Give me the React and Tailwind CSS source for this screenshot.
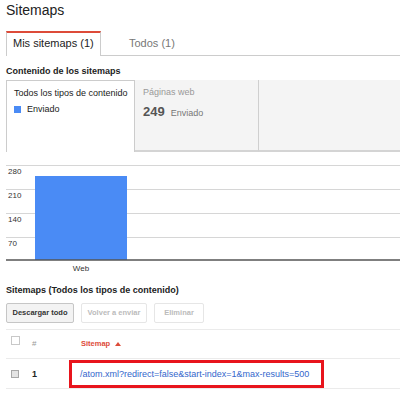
export default function App() {
  const grid = [
    { y: 13, label: "280" },
    { y: 37, label: "210" },
    { y: 61, label: "140" },
    { y: 85, label: "70" },
  ];
  return (
    <div className="w-[400px] h-[394px] overflow-hidden bg-white pl-[6px] font-['Liberation_Sans',Arial,sans-serif] text-[#222]">
      <div className="text-[14px] leading-[20px] text-[#222]">Sitemaps</div>

      <div className="mt-[11px] flex h-[25px]">
        <div className="w-[95px] h-[25px] border-t-2 border-t-[#dd4b39] border-x border-x-[#ccc] bg-white pl-[6px] pt-[4px] text-[11px] leading-[13px] text-[#222]">
          Mis sitemaps (1)
        </div>
        <div className="flex-1 border-b border-[#ccc] pl-[28px] pt-[6px] text-[11px] leading-[13px] text-[#777]">
          Todos (1)
        </div>
      </div>

      <div className="mt-[9px] text-[9px] leading-[12px] font-bold text-[#222]">Contenido de los sitemaps</div>

      <div className="mt-[3px] flex h-[72px]">
        <div className="w-[129px] h-[72px] border-t border-x border-[#ccc] bg-white pl-[7px] pt-[6px]">
          <div className="text-[9px] leading-[12px] text-[#222]">Todos los tipos de contenido</div>
          <div className="mt-[4px] flex items-center text-[9px] leading-[12px] text-[#222]">
            <span className="w-[7px] h-[7px] bg-[#4a8bf5] mr-[6px]"></span>
            Enviado
          </div>
        </div>
        <div className="w-[124px] h-[72px] bg-[#f4f4f4] border-b-2 border-b-[#d4d4d4] border-r border-r-[#cfcfcf] pl-[8px] pt-[6px]">
          <div className="text-[9px] leading-[12px] text-[#999]">Páginas web</div>
          <div className="mt-[6px] flex items-baseline">
            <span className="text-[13px] leading-[16px] font-bold text-[#555]">249</span>
            <span className="ml-[6px] text-[9px] leading-[12px] text-[#777]">Enviado</span>
          </div>
        </div>
        <div className="flex-1 h-[72px] bg-[#f4f4f4] border-b-2 border-b-[#d4d4d4]"></div>
      </div>

      <svg width="394" height="124" className="block">
        {grid.map((g) => (
          <g key={g.label}>
            <line x1="0" x2="394" y1={g.y + 0.5} y2={g.y + 0.5} stroke="#d6d6d6" strokeWidth="1" />
            <text x="2" y={g.y + 9} fontSize="8" fill="#333" fontFamily="Liberation Sans, Arial, sans-serif">
              {g.label}
            </text>
          </g>
        ))}
        <rect x="29" y="24" width="92" height="84" fill="#4a8bf5" />
        <line x1="0" x2="394" y1="108" y2="108" stroke="#555" strokeWidth="1.5" />
        <text x="75" y="119" fontSize="8" fill="#333" textAnchor="middle" fontFamily="Liberation Sans, Arial, sans-serif">
          Web
        </text>
      </svg>

      <div className="mt-[8px] text-[9px] leading-[12px] font-bold text-[#222]">Sitemaps (Todos los tipos de contenido)</div>

      <div className="mt-[7px] flex gap-[7px]">
        <div className="w-[68px] h-[20px] flex items-center justify-center rounded-[2px] border border-[#c6c6c6] bg-[#f3f3f3] text-[7.5px] font-bold text-[#333]">
          Descargar todo
        </div>
        <div className="w-[66px] h-[20px] flex items-center justify-center rounded-[2px] border border-[#e6e6e6] bg-white text-[7.5px] font-bold text-[#bbb]">
          Volver a enviar
        </div>
        <div className="w-[50px] h-[20px] flex items-center justify-center rounded-[2px] border border-[#e6e6e6] bg-white text-[7.5px] font-bold text-[#bbb]">
          Eliminar
        </div>
      </div>

      <div className="mt-[6px] border-t border-[#ebebeb]">
        <div className="flex h-[29px] items-center border-b border-[#ebebeb]">
          <div className="w-[26px] h-full pl-[5px] pt-[6px]">
            <div className="w-[9px] h-[9px] border border-[#c8c8c8] bg-white"></div>
          </div>
          <div className="w-[37px] text-[8px] leading-[10px] text-[#999]">#</div>
          <div className="flex items-center pl-[12px] text-[7.5px] leading-[10px] font-bold text-[#dd4b39]">
            Sitemap
            <svg width="6" height="4" className="ml-[5px]">
              <polygon points="0,4 3,0 6,4" fill="#dd4b39" />
            </svg>
          </div>
        </div>
        <div className="flex h-[30px] items-center border-b border-[#ebebeb]">
          <div className="w-[26px] pl-[5px]">
            <div className="w-[8px] h-[8px] border border-[#a8a8a8] bg-[#e4e4e4]"></div>
          </div>
          <div className="w-[37px] text-[9px] leading-[12px] font-bold text-[#222]">1</div>
          <div className="w-[255px] h-[28px] border-[3px] border-[#e8141c] flex items-center pl-[8px] text-[9px] leading-[12px] text-[#3366cc] whitespace-nowrap">
            /atom.xml?redirect=false&amp;start-index=1&amp;max-results=500
          </div>
        </div>
      </div>
    </div>
  );
}
